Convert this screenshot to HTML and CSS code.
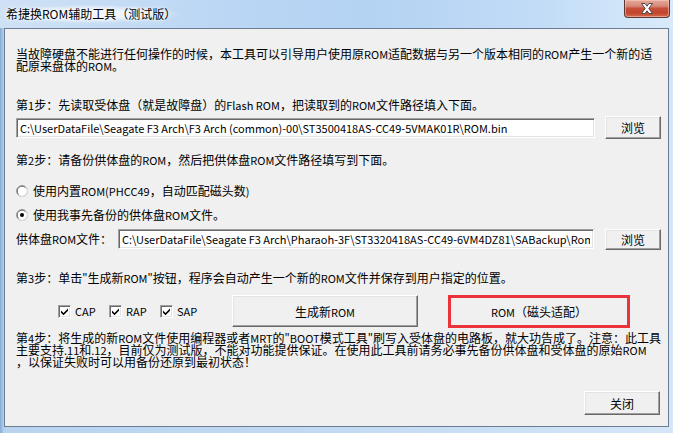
FILE: index.html
```html
<!DOCTYPE html>
<html lang="zh-CN">
<head>
    <meta charset="UTF-8">
    <meta name="viewport" content="width=device-width, initial-scale=1.0">
    <title>希捷换ROM辅助工具（测试版）</title>
    <link rel="stylesheet" href="styles.css">
</head>
<body>
    <div class="window">
        <div class="titlebar">
            <span class="title">希捷换ROM辅助工具（测试版）</span>
            <button class="close-x" title="关闭">
                <svg width="14" height="11" viewBox="0 0 14 11">
                    <path d="M1.5 0.5 H5 L7 3.2 L9 0.5 H12.5 L8.8 5.5 L12.5 10.5 H9 L7 7.8 L5 10.5 H1.5 L5.2 5.5 Z" fill="#fff" stroke="#4b4b4b" stroke-width="1"/>
                </svg>
            </button>
        </div>

        <div class="client">
            <p class="text intro">当故障硬盘不能进行任何操作的时候，本工具可以引导用户使用原<span class="en">ROM</span>适配数据与另一个版本相同的<span class="en">ROM</span>产生一个新的适<br>配原来盘体的<span class="en">ROM</span>。</p>

            <p class="text step1">第<span class="en">1</span>步：先读取受体盘（就是故障盘）的<span class="en">Flash ROM</span>，把读取到的<span class="en">ROM</span>文件路径填入下面。</p>
            <div class="row row1">
                <input class="field" type="text" value="C:\UserDataFile\Seagate F3 Arch\F3 Arch (common)-00\ST3500418AS-CC49-5VMAK01R\ROM.bin">
                <button class="btn browse">浏览</button>
            </div>

            <p class="text step2">第<span class="en">2</span>步：请备份供体盘的<span class="en">ROM</span>，然后把供体盘<span class="en">ROM</span>文件路径填写到下面。</p>
            <div class="option radio1">
                <svg class="radio" width="12" height="12" viewBox="0 0 12 12">
                    <circle cx="6" cy="6" r="5.5" fill="#fff" stroke="#a0a0a0"/>
                    <path d="M2.1 9.9 A5 5 0 0 0 9.9 2.1" fill="none" stroke="#e3e3e3" stroke-width="1"/>
                    <path d="M2.6 9.4 A4.6 4.6 0 0 1 9.4 2.6" fill="none" stroke="#696969" stroke-width="1"/>
                </svg>
                <span>使用内置<span class="en">ROM(PHCC49</span>，自动匹配磁头数<span class="en">)</span></span>
            </div>
            <div class="option radio2">
                <svg class="radio" width="12" height="12" viewBox="0 0 12 12">
                    <circle cx="6" cy="6" r="5.5" fill="#fff" stroke="#a0a0a0"/>
                    <path d="M2.1 9.9 A5 5 0 0 0 9.9 2.1" fill="none" stroke="#e3e3e3" stroke-width="1"/>
                    <path d="M2.6 9.4 A4.6 4.6 0 0 1 9.4 2.6" fill="none" stroke="#696969" stroke-width="1"/>
                    <circle cx="6" cy="6" r="2" fill="#000"/>
                </svg>
                <span>使用我事先备份的供体盘<span class="en">ROM</span>文件。</span>
            </div>
            <div class="row row2">
                <span class="label">供体盘<span class="en">ROM</span>文件：</span>
                <input class="field" type="text" value="C:\UserDataFile\Seagate F3 Arch\Pharaoh-3F\ST3320418AS-CC49-6VM4DZ81\SABackup\Rom\ROM.bin">
                <button class="btn browse">浏览</button>
            </div>

            <p class="text step3">第<span class="en">3</span>步：单击<span class="en">"</span>生成新<span class="en">ROM"</span>按钮，程序会自动产生一个新的<span class="en">ROM</span>文件并保存到用户指定的位置。</p>
            <div class="row row3">
                <div class="checks">
                    <label class="check"><span class="box"><svg width="9" height="9" viewBox="0 0 9 9"><path d="M1 3.5 L3.5 6 L8 1.5 V3.8 L3.5 8.2 L1 5.7 Z" fill="#000"/></svg></span><span class="en">CAP</span></label>
                    <label class="check"><span class="box"><svg width="9" height="9" viewBox="0 0 9 9"><path d="M1 3.5 L3.5 6 L8 1.5 V3.8 L3.5 8.2 L1 5.7 Z" fill="#000"/></svg></span><span class="en">RAP</span></label>
                    <label class="check"><span class="box"><svg width="9" height="9" viewBox="0 0 9 9"><path d="M1 3.5 L3.5 6 L8 1.5 V3.8 L3.5 8.2 L1 5.7 Z" fill="#000"/></svg></span><span class="en">SAP</span></label>
                </div>
                <button class="btn generate">生成新<span class="en">ROM</span></button>
                <button class="btn head-fit"><span class="en">ROM</span>（磁头适配）</button>
            </div>

            <p class="text step4">第<span class="en">4</span>步：将生成的新<span class="en">ROM</span>文件使用编程器或者<span class="en">MRT</span>的<span class="en">"BOOT</span>模式工具<span class="en">"</span>刷写入受体盘的电路板，就大功告成了。注意：此工具<br>主要支持<span class="en">.11</span>和<span class="en">.12</span>，目前仅为测试版，不能对功能提供保证。在使用此工具前请务必事先备份供体盘和受体盘的原始<span class="en">ROM</span><br>，以保证失败时可以用备份还原到最初状态！</p>

            <div class="row close-row">
                <button class="btn close-btn">关闭</button>
            </div>
        </div>
    </div>
</body>
</html>
```

FILE: styles.css
```css
* {
    margin: 0;
    padding: 0;
    box-sizing: border-box;
}

body {
    width: 673px;
    height: 433px;
    overflow: hidden;
    font-family: "Noto Sans CJK SC", sans-serif;
    font-size: 12px;
    color: #000;
}

.window {
    height: 433px;
    display: flex;
    flex-direction: column;
    padding: 0 4px 6px 4px;
    background: linear-gradient(to right, #86acd6 0, #b9d3ef 4px, #c2daf3 50%, #d5e6f8 100%);
}

.titlebar {
    height: 28px;
    margin: 0 -4px;
    display: flex;
    justify-content: space-between;
    align-items: flex-start;
    background: linear-gradient(to right, #cfe1f5 0, #bad6f4 35%, #b4d2f3 55%, #c2dcf7 80%, #d9eafa 100%);
}

.title {
    margin: 5px 0 0 2px;
    padding: 0 4px;
    line-height: 18px;
    font-size: 12px;
    color: #000;
    background: radial-gradient(ellipse at center, rgba(255, 255, 255, 0.75) 30%, rgba(255, 255, 255, 0) 72%);
    text-shadow: 0 0 6px #fff, 0 0 3px #fff;
}

.close-x {
    width: 46px;
    height: 18px;
    margin-right: 3px;
    border: 1px solid #5b3a36;
    border-top: none;
    border-radius: 0 0 4px 4px;
    background: linear-gradient(#e5a899 0, #d88a7a 35%, #c6503c 50%, #c3442c 75%, #d46a4c 100%);
    box-shadow: inset 0 0 0 1px rgba(255, 210, 200, 0.5);
    display: flex;
    align-items: center;
    justify-content: center;
}

.close-x svg {
    display: block;
}

.client {
    flex: 1;
    display: flex;
    flex-direction: column;
    padding: 0 7px 0 11px;
    background: #f0f0f0;
    border: 1px solid #6b7d92;
}

.text {
    line-height: 12px;
    white-space: nowrap;
}

.en {
    font-size: 11px;
}

.intro { margin-top: 19px; }
.step1 { margin-top: 27px; }
.row1 { margin-top: 5px; height: 23px; }
.step2 { margin-top: 15px; }
.radio1 { margin-top: 19px; }
.radio2 { margin-top: 12px; }
.row2 { margin-top: 7px; height: 22px; }
.step3 { margin-top: 22px; }
.row3 { margin-top: 11px; height: 32px; }
.step4 { margin-top: 5px; }
.close-row { margin-top: 23px; height: 24px; justify-content: flex-end; }

.row {
    display: flex;
    align-items: center;
}

.field {
    flex: 1;
    height: 20px;
    padding: 0 3px;
    font-family: inherit;
    font-size: 11px;
    color: #000;
    background: #fff;
    border: 1px solid;
    border-color: #a0a0a0 #fff #fff #a0a0a0;
    box-shadow: inset 1px 1px 0 #696969, inset -1px -1px 0 #e3e3e3;
    outline: none;
}

.btn {
    font-family: inherit;
    font-size: 12px;
    color: #000;
    background: #f0f0f0;
    border: 1px solid;
    border-color: #fff #696969 #696969 #fff;
    box-shadow: inset -1px -1px 0 #a0a0a0, inset 1px 1px 0 #e3e3e3;
}

.browse {
    width: 56px;
    margin-left: 10px;
}

.row1 .browse { height: 23px; }
.row2 .browse { height: 21px; margin-left: 11px; }

.label {
    width: 102px;
    line-height: 12px;
    white-space: nowrap;
}

.option {
    display: flex;
    align-items: center;
    height: 12px;
    line-height: 12px;
    white-space: nowrap;
    padding-left: 0;
}

.radio {
    display: block;
    margin: 0 5px 0 0;
}

.checks {
    display: flex;
    padding-left: 42px;
}

.check {
    width: 51px;
    display: flex;
    align-items: center;
    gap: 4px;
}

.box {
    width: 13px;
    height: 13px;
    display: flex;
    align-items: center;
    justify-content: center;
    background: #fff;
    border: 1px solid;
    border-color: #a0a0a0 #fff #fff #a0a0a0;
    box-shadow: inset 1px 1px 0 #696969, inset -1px -1px 0 #e3e3e3;
}

.box svg {
    display: block;
}

.generate {
    width: 186px;
    height: 32px;
    margin-left: 21px;
}

.head-fit {
    width: 182px;
    height: 33px;
    margin-left: 30px;
    border: 3px solid #ec3339;
    box-shadow: none;
    background: #f0f0f0;
}

.step4 {
    line-height: 12px;
}

.close-btn {
    width: 76px;
    height: 24px;
    margin-right: 1px;
}
```
